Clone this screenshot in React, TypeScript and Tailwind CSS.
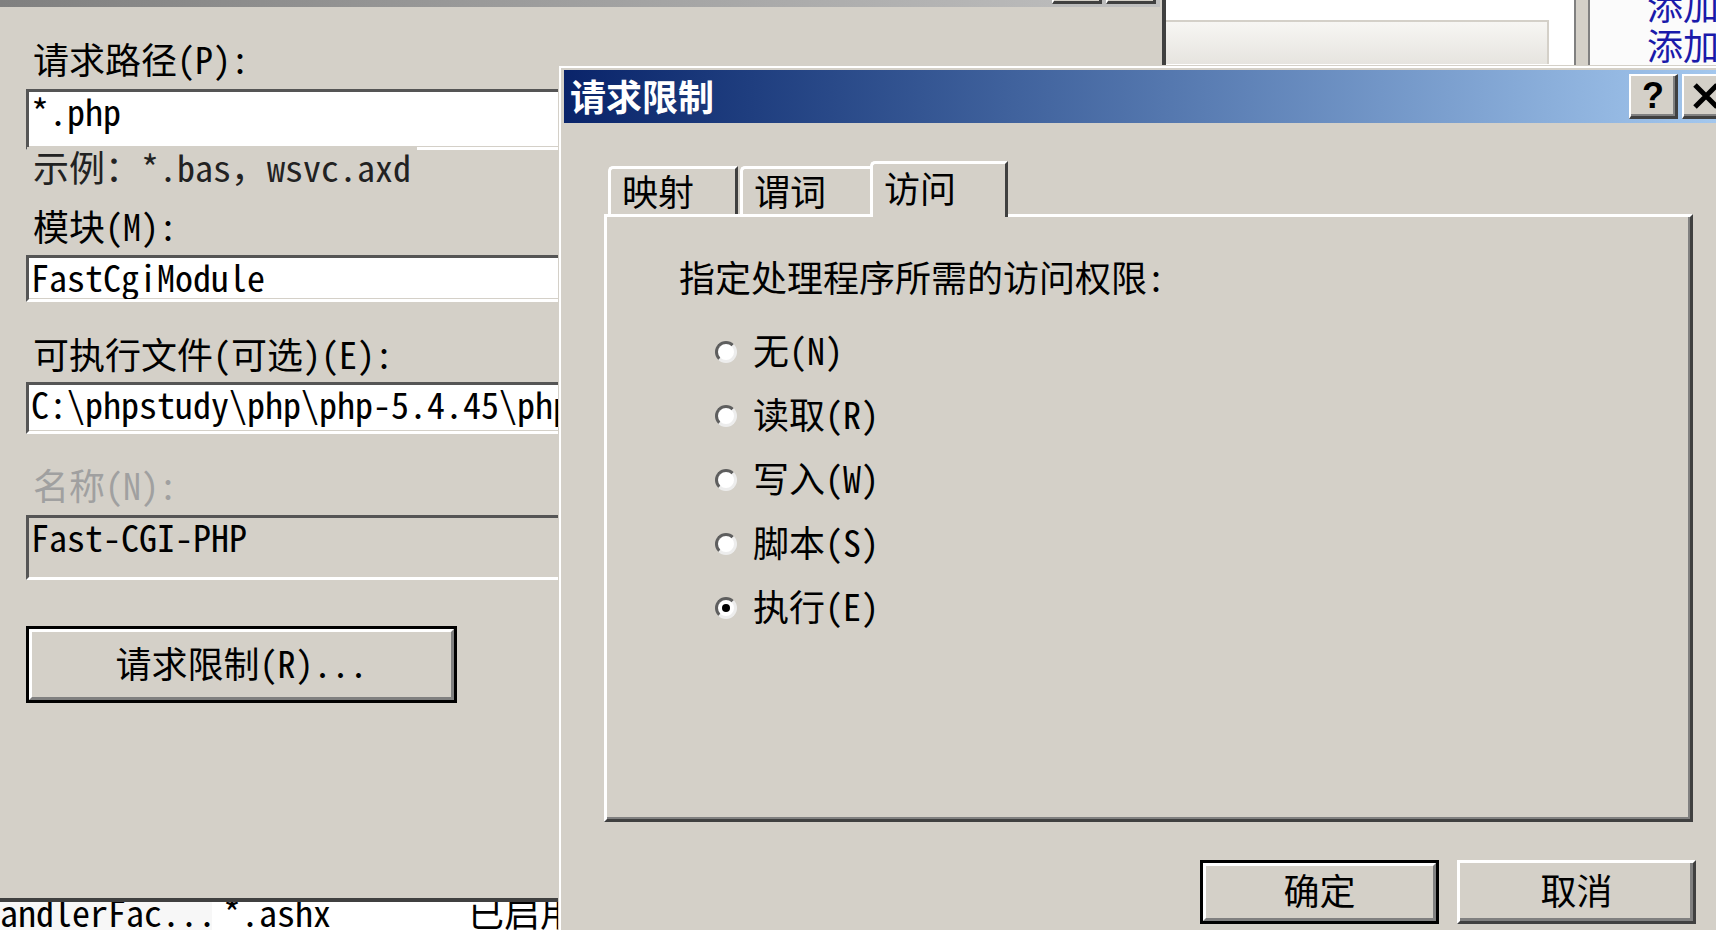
import React from "react";

const boxCls =
  "w-[540px] border-[3px] border-t-[#555555] border-l-[#555555] border-r-white border-b-white shadow-[inset_0_-1px_0_#d4d0c8] pl-[2px] leading-[36px] whitespace-nowrap overflow-hidden";

// labels sit a little higher in their 40px line than the font would put them
const labelCls = "ml-[7px] leading-[34px] pb-[6px]";

function Radio({ checked }: { checked?: boolean }) {
  return (
    <span className="flex h-[22px] w-[22px] items-center justify-center rounded-full border-[3px] border-t-[#5e5e5e] border-l-[#5e5e5e] border-r-[#ededed] border-b-[#ededed] bg-white">
      {checked && <span className="h-[8px] w-[8px] rounded-full bg-black" />}
    </span>
  );
}

function IisBackdrop() {
  return (
    <div className="absolute inset-0 flex flex-col bg-white">
      <div className="flex h-[65px]">
        <div className="w-[1166px] shrink-0" />
        <div className="w-[408px] shrink-0">
          <div className="mt-[20px] h-[44px] w-[383px] border-t-2 border-r-2 border-[#d4d0c8] bg-linear-to-b from-[#f7f6f3] to-[#e6e4df]" />
        </div>
        <div className="w-[16px] shrink-0 border-x-2 border-[#808080] bg-[#d4d0c8]" />
        <div className="flex-1 overflow-hidden bg-[#fbfbfb] pl-[57px] text-[#1a1aaa]">
          <div className="-mt-[16px] whitespace-nowrap">
            <p>添加托管处理程序...</p>
            <p>添加脚本映射...</p>
          </div>
        </div>
      </div>
      <div className="flex-1" />
      <div className="flex h-[28px] w-[560px] overflow-hidden whitespace-nowrap leading-[19px]">
        <div className="w-[212px] shrink-0 overflow-hidden bg-[#f7f7f7]">
          <span className="-ml-[18px] block">HandlerFac...</span>
        </div>
        <div className="w-[256px] shrink-0 pl-[11px]">*.ashx</div>
        <div className="shrink-0">已启用</div>
      </div>
    </div>
  );
}

function EditMappingWindow() {
  return (
    <div className="absolute left-0 top-0 flex h-[902px] w-[1166px] flex-col border-r-4 border-b-4 border-[#404040] bg-[#d4d0c8]">
      <div className="flex h-[7px] w-[1160px] justify-end gap-[4px] bg-linear-to-r from-[#808080] to-[#c0c0c0] pr-[4px]">
        <div className="h-[4px] w-[50px] border-l-2 border-b-[3px] border-r-[3px] border-l-white border-b-[#404040] border-r-[#404040] bg-[#d4d0c8]" />
        <div className="h-[4px] w-[50px] border-l-2 border-b-[3px] border-r-[3px] border-l-white border-b-[#404040] border-r-[#404040] bg-[#d4d0c8]" />
      </div>
      <div className="flex flex-col pl-[26px]">
        <p className={`mt-[34px] ${labelCls}`}>请求路径(P):</p>
        <div className={`mt-[8px] h-[61px] bg-white ${boxCls}`}>*.php</div>
        <p className="relative -mt-[3px] ml-[1px] w-fit bg-[#d4d0c8] px-[6px] pb-[6px] leading-[38px] text-[#222222]">
          示例：*.bas，wsvc.axd
        </p>
        <p className={`mt-[17px] ${labelCls}`}>模块(M):</p>
        <div className={`mt-[7px] h-[47px] bg-white ${boxCls}`}>FastCgiModule</div>
        <p className={`mt-[34px] ${labelCls}`}>可执行文件(可选)(E):</p>
        <div className={`mt-[6px] h-[52px] bg-white ${boxCls}`}>C:\phpstudy\php\php-5.4.45\php-cgi.exe</div>
        <p className={`mt-[33px] ${labelCls} text-[#a0a0a0]`}>名称(N):</p>
        <div className={`mt-[8px] h-[65px] bg-[#d4d0c8] ${boxCls}`}>Fast-CGI-PHP</div>
        <button className="mt-[46px] h-[77px] w-[431px] border-[3px] border-black">
          <span className="flex h-full w-full items-center justify-center border-[3px] border-t-white border-l-white border-r-[#808080] border-b-[#808080]">
            <span className="pb-[6px] leading-[34px]">请求限制(R)...</span>
          </span>
        </button>
      </div>
    </div>
  );
}

const options = [
  { label: "无(N)", checked: false },
  { label: "读取(R)", checked: false },
  { label: "写入(W)", checked: false },
  { label: "脚本(S)", checked: false },
  { label: "执行(E)", checked: true },
];

function RequestRestrictionsDialog() {
  return (
    <div className="absolute left-[558px] top-[65px] h-[880px] w-[1180px] bg-[#d4d0c8] p-px">
      <div className="h-full border-t-2 border-l-2 border-white pt-[2px] pl-[3px] pr-[3px]">
        <div className="flex h-[53px] items-center bg-linear-to-r from-[#0a246a] to-[#a6caf0] pr-[3px]">
          <span className="flex-1 pb-[4px] pl-[6px] leading-[34px] font-bold text-white">请求限制</span>
          <div className="flex gap-[4px]">
            <span className="flex h-[45px] w-[49px] items-center justify-center border-t-2 border-l-2 border-r-[3px] border-b-[3px] border-t-white border-l-white border-r-[#404040] border-b-[#404040] bg-[#d4d0c8] text-[36px] leading-none font-black shadow-[inset_-2px_-2px_0_#808080] [font-family:'Liberation_Sans',sans-serif]">
              ?
            </span>
            <span className="flex h-[45px] w-[49px] items-center justify-center border-t-2 border-l-2 border-r-[3px] border-b-[3px] border-t-white border-l-white border-r-[#404040] border-b-[#404040] bg-[#d4d0c8] shadow-[inset_-2px_-2px_0_#808080]">
              <svg width="28" height="26" viewBox="0 0 28 26">
                <path d="M3 2 L25 24 M25 2 L3 24" stroke="#000" strokeWidth="5" />
              </svg>
            </span>
          </div>
        </div>

        <div className="pl-[40px]">
          <div className="mt-[38px] flex h-[53px] items-start pl-[4px]">
            <div className="mt-[5px] h-[48px] w-[130px] rounded-tl-[5px] border-t-[3px] border-l-[3px] border-r-[3px] border-t-white border-l-white border-r-[#404040] pl-[11px] pt-[2px] leading-[38px]">
              映射
            </div>
            <div className="mt-[5px] ml-[2px] h-[48px] w-[130px] rounded-tl-[5px] border-t-[3px] border-l-[3px] border-t-white border-l-white pl-[11px] pt-[2px] leading-[38px]">
              谓词
            </div>
            <div className="relative z-10 h-[56px] w-[138px] rounded-tl-[5px] border-t-[3px] border-l-[3px] border-r-[3px] border-t-white border-l-white border-r-[#404040] bg-[#d4d0c8] pl-[11px] pt-[4px] leading-[38px]">
              访问
            </div>
          </div>
          <div className="h-[608px] w-[1089px] border-[3px] border-t-white border-l-white border-r-[#404040] border-b-[#404040] pl-[72px] pt-[42px] shadow-[inset_-2px_-2px_0_#808080]">
            <p className="pb-[6px] leading-[34px]">指定处理程序所需的访问权限:</p>
            <div className="mt-[21px] flex flex-col">
              {options.map((o) => (
                <label key={o.label} className="flex h-[64px] items-center">
                  <span className="ml-[36px]">
                    <Radio checked={o.checked} />
                  </span>
                  <span className="ml-[16px] pb-[6px] leading-[34px]">{o.label}</span>
                </label>
              ))}
            </div>
          </div>
          <div className="mt-[38px] flex w-[1092px] justify-end gap-[18px]">
            <button className="h-[64px] w-[239px] border-[3px] border-black">
              <span className="flex h-full w-full items-center justify-center border-[3px] border-t-white border-l-white border-r-[#808080] border-b-[#808080]">
                <span className="pb-[6px] leading-[34px]">确定</span>
              </span>
            </button>
            <button className="flex h-[64px] w-[239px] items-center justify-center border-[3px] border-t-white border-l-white border-r-[#404040] border-b-[#404040] shadow-[inset_-3px_-3px_0_#808080]">
              <span className="pb-[6px] leading-[34px]">取消</span>
            </button>
          </div>
        </div>
      </div>
    </div>
  );
}

export default function App() {
  return (
    <div className="relative h-[930px] w-[1716px] overflow-hidden bg-white text-[36px] leading-[40px] text-black [font-family:'Noto_Sans_Mono_CJK_SC','Noto_Sans_CJK_SC',monospace]">
      <IisBackdrop />
      <EditMappingWindow />
      <RequestRestrictionsDialog />
    </div>
  );
}
